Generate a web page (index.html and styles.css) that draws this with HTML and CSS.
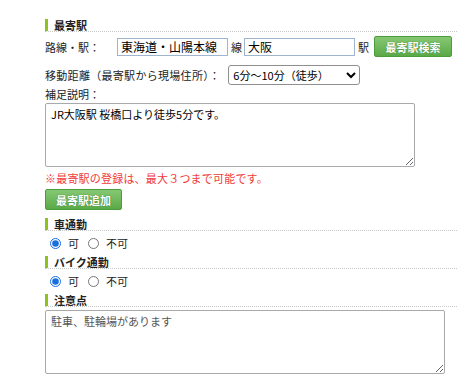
FILE: index.html
```html
<!DOCTYPE html>
<html lang="ja">
	<head>
		<meta charset="utf-8" />
		<title>最寄駅</title>
		<link rel="stylesheet" href="styles.css">
	</head>
	<body>
		<div class="form">
			<h3 class="head"><span>最寄駅</span></h3>
			<div class="row row-station">
				<span class="label">路線・駅：</span>
				<input class="text" type="text" value="東海道・山陽本線">
				<span class="unit">線</span>
				<input class="text" type="text" value="大阪">
				<span class="unit">駅</span>
				<button class="btn btn-search">最寄駅検索</button>
			</div>
			<div class="row row-distance">
				<span class="label">移動距離（最寄駅から現場住所）：</span>
				<select class="select">
					<option>6分～10分（徒歩）</option>
				</select>
			</div>
			<div class="label note-label">補足説明：</div>
			<textarea class="area area-station">JR大阪駅 桜橋口より徒歩5分です。</textarea>
			<p class="warn">※最寄駅の登録は、最大３つまで可能です。</p>
			<button class="btn btn-add">最寄駅追加</button>

			<h3 class="head"><span>車通勤</span></h3>
			<div class="radios">
				<label><input type="radio" name="car" checked>可</label>
				<label><input type="radio" name="car">不可</label>
			</div>

			<h3 class="head"><span>バイク通勤</span></h3>
			<div class="radios">
				<label><input type="radio" name="bike" checked>可</label>
				<label><input type="radio" name="bike">不可</label>
			</div>

			<h3 class="head"><span>注意点</span></h3>
			<textarea class="area area-notes">駐車、駐輪場があります</textarea>
		</div>
	</body>
</html>
```
FILE: styles.css
```css
body {
	margin: 0;
	background: #fff;
	color: #222;
	font-family: "Noto Sans CJK JP", "Noto Sans", sans-serif;
	font-size: 11px;
}

.form {
	display: flex;
	flex-direction: column;
	align-items: flex-start;
	width: 412px;
	padding: 19px 0 0 45px;
}

/* 見出し：左の緑バーと点線 */
.head {
	align-self: stretch;
	margin: 0;
	font-size: 11px;
	font-weight: bold;
	line-height: 12px;
	border-bottom: 1px dotted #c8c8c8;
}
.head span {
	display: block;
	border-left: 3px solid #8dc21f;
	padding-left: 6px;
}

.row {
	display: flex;
	align-items: center;
}
.row-station {
	margin-top: 4px;
	height: 21px;
}
.row-station .label {
	width: 72px;
}
.unit {
	margin: 0 2px 0 3px;
}
.text {
	box-sizing: border-box;
	width: 111px;
	height: 18px;
	margin: 0;
	padding: 0 3px;
	border: 1px solid #9fb4cf;
	font-family: inherit;
	font-size: 12px;
	color: #000;
}
.btn {
	box-sizing: border-box;
	height: 21px;
	padding: 0;
	border: 1px solid #4b9c3b;
	border-radius: 2px;
	background: linear-gradient(#86c874, #5aa947);
	color: #fff;
	font-family: inherit;
	font-size: 11px;
	font-weight: bold;
	text-shadow: 0 0 1px #2f6a24;
}
.btn-search {
	width: 78px;
	margin-left: 3px;
}

.row-distance {
	margin-top: 8px;
	height: 20px;
}
.row-distance .label {
	margin-right: 8px;
	letter-spacing: 0.3px;
}
.select {
	box-sizing: border-box;
	width: 132px;
	height: 20px;
	margin: 0;
	border: 1px solid #8f8f8f;
	border-radius: 3px;
	background: #fff;
	font-family: inherit;
	font-size: 11px;
	color: #000;
}

.note-label {
	margin-top: 3px;
	line-height: 13px;
}
.area {
	box-sizing: border-box;
	margin: 2px 0 0;
	padding: 3px 5px;
	border: 1px solid #a9a9ad;
	border-radius: 2px;
	font-family: inherit;
	font-size: 11px;
	line-height: 14px;
}
.area-station {
	width: 370px;
	height: 64px;
	color: #000;
}
.warn {
	margin: 5px 0 0;
	color: #f03a3a;
	line-height: 12px;
	letter-spacing: 0.2px;
}
.btn-add {
	width: 77px;
	margin: 5px 0 8px;
}

.radios {
	display: flex;
	align-items: center;
	gap: 9px;
	height: 13px;
	margin: 6px 0 6px 5px;
	line-height: 13px;
}
.radios label {
	display: flex;
	align-items: center;
}
.radios input {
	width: 11px;
	height: 11px;
	margin: 0 7px 0 0;
	accent-color: #1a6fe0;
}

.area-notes {
	width: 400px;
	height: 64px;
	margin-top: 3px;
	color: #555;
}
```
